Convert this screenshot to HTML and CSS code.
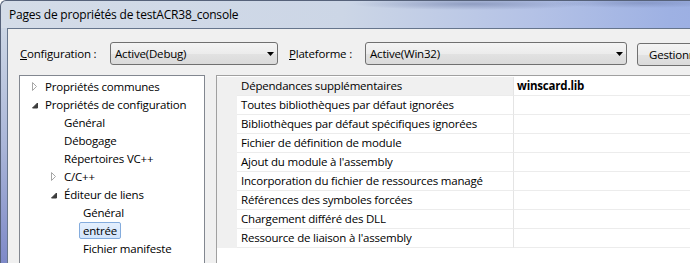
FILE: index.html
```html
<!DOCTYPE html>
<html lang="fr">
<head>
<meta charset="utf-8">
<title>Pages de propriétés de testACR38_console</title>
<link rel="stylesheet" href="styles.css">
</head>
<body>
<div class="window">
  <div class="titlebar"><span class="title-text">Pages de propriétés de testACR38_console</span></div>
  <div class="frame">
    <div class="frame-edge"></div>
    <div class="client">
      <div class="toolbar">
        <span class="field-label label-config"><u>C</u>onfiguration :</span>
        <div class="combo combo-config">
          <span>Active(Debug)</span>
          <svg class="combo-arrow" width="7" height="4" viewBox="0 0 7 4"><polygon points="0,0 7,0 3.5,4" fill="#000"/></svg>
        </div>
        <span class="field-label label-platform"><u>P</u>lateforme :</span>
        <div class="combo combo-platform">
          <span>Active(Win32)</span>
          <svg class="combo-arrow" width="7" height="4" viewBox="0 0 7 4"><polygon points="0,0 7,0 3.5,4" fill="#000"/></svg>
        </div>
        <button class="btn">Gestionnaire de configurations...</button>
      </div>
      <div class="panels">
        <div class="tree">
          <div class="tree-row lvl0">
            <span class="twisty"><svg width="6" height="9" viewBox="0 0 6 9"><polygon points="0.5,0.5 4.5,4.5 0.5,8.5" fill="#fff" stroke="#a6a6a6"/></svg></span>
            <span class="tree-label">Propriétés communes</span>
          </div>
          <div class="tree-row lvl0">
            <span class="twisty"><svg width="6" height="9" viewBox="0 0 6 9"><polygon points="5.5,3 5.5,8 0.5,8" fill="#3c3c3c" stroke="#3c3c3c" stroke-linejoin="round"/></svg></span>
            <span class="tree-label">Propriétés de configuration</span>
          </div>
          <div class="tree-row lvl1"><span class="twisty"></span><span class="tree-label">Général</span></div>
          <div class="tree-row lvl1"><span class="twisty"></span><span class="tree-label">Débogage</span></div>
          <div class="tree-row lvl1"><span class="twisty"></span><span class="tree-label">Répertoires VC++</span></div>
          <div class="tree-row lvl1">
            <span class="twisty"><svg width="6" height="9" viewBox="0 0 6 9"><polygon points="0.5,0.5 4.5,4.5 0.5,8.5" fill="#fff" stroke="#a6a6a6"/></svg></span>
            <span class="tree-label">C/C++</span>
          </div>
          <div class="tree-row lvl1">
            <span class="twisty"><svg width="6" height="9" viewBox="0 0 6 9"><polygon points="5.5,3 5.5,8 0.5,8" fill="#3c3c3c" stroke="#3c3c3c" stroke-linejoin="round"/></svg></span>
            <span class="tree-label">Éditeur de liens</span>
          </div>
          <div class="tree-row lvl2"><span class="twisty"></span><span class="tree-label">Général</span></div>
          <div class="tree-row lvl2"><span class="twisty"></span><span class="tree-label selected">entrée</span></div>
          <div class="tree-row lvl2"><span class="twisty"></span><span class="tree-label">Fichier manifeste</span></div>
          <div class="tree-row lvl2"><span class="twisty"></span><span class="tree-label">Débogage</span></div>
        </div>
        <div class="grid">
          <div class="grid-row current"><div class="gutter"></div><div class="cell name">Dépendances supplémentaires</div><div class="cell value">winscard.lib</div></div>
          <div class="grid-row"><div class="gutter"></div><div class="cell name">Toutes bibliothèques par défaut ignorées</div><div class="cell value"></div></div>
          <div class="grid-row"><div class="gutter"></div><div class="cell name">Bibliothèques par défaut spécifiques ignorées</div><div class="cell value"></div></div>
          <div class="grid-row"><div class="gutter"></div><div class="cell name">Fichier de définition de module</div><div class="cell value"></div></div>
          <div class="grid-row"><div class="gutter"></div><div class="cell name">Ajout du module à l'assembly</div><div class="cell value"></div></div>
          <div class="grid-row"><div class="gutter"></div><div class="cell name">Incorporation du fichier de ressources managé</div><div class="cell value"></div></div>
          <div class="grid-row"><div class="gutter"></div><div class="cell name">Références des symboles forcées</div><div class="cell value"></div></div>
          <div class="grid-row"><div class="gutter"></div><div class="cell name">Chargement différé des DLL</div><div class="cell value"></div></div>
          <div class="grid-row"><div class="gutter"></div><div class="cell name">Ressource de liaison à l'assembly</div><div class="cell value"></div></div>
        </div>
      </div>
    </div>
  </div>
</div>
</body>
</html>
```

FILE: styles.css
```css
html, body {
  margin: 0;
  padding: 0;
}
body {
  width: 690px;
  height: 263px;
  overflow: hidden;
  background: #ffffff;
  font-family: "Open Sans", "Noto Sans", sans-serif;
  font-size: 11.5px;
  letter-spacing: -0.2px;
  color: #000;
}
.window {
  width: 760px;
  height: 263px;
  display: flex;
  flex-direction: column;
}
.titlebar {
  height: 28px;
  box-sizing: border-box;
  border-top: 1px solid #56627a;
  border-left: 1px solid #56627a;
  border-top-left-radius: 6px;
  padding-left: 8px;
  line-height: 27px;
  font-size: 12px;
  background:
    radial-gradient(ellipse 120px 6px at 470px 3px, rgba(90,105,150,0.45), rgba(90,105,150,0) 100%),
    radial-gradient(ellipse 90px 5px at 640px 2px, rgba(90,105,150,0.35), rgba(90,105,150,0) 100%),
    linear-gradient(to right, #d4dce8 0%, #ccd6e6 45%, #b4c2e6 70%, #9eb1e3 88%, #98ace2 100%);
  color: #000;
}
.frame {
  flex: 1;
  display: flex;
  min-height: 0;
}
.frame-edge {
  width: 6px;
  flex: none;
  border-left: 1px solid #56627a;
  background: linear-gradient(to bottom, #ccd6e5 0%, #aab6d8 50%, #7e89c8 100%);
}
.client {
  flex: 1;
  min-width: 0;
  background: #f0f0f0;
  border-top: 1px solid #66758c;
  border-left: 1px solid #66758c;
  padding: 13px 0 0 11px;
  overflow: hidden;
}
.toolbar {
  display: flex;
  align-items: center;
  height: 23px;
  margin-left: 1px;
}
.toolbar > * {
  flex: none;
}
.field-label {
  white-space: nowrap;
}
.label-config {
  width: 90px;
}
.label-platform {
  width: 76px;
  margin-left: 11px;
}
.combo {
  height: 23px;
  box-sizing: border-box;
  border: 1px solid #707070;
  border-radius: 3px;
  background: linear-gradient(to bottom, #f4f4f4 0%, #ececec 50%, #e2e2e2 51%, #dadada 100%);
  display: flex;
  align-items: center;
  justify-content: space-between;
  padding: 0 3px 0 4px;
  white-space: nowrap;
}
.combo-config {
  width: 168px;
}
.combo-platform {
  width: 262px;
}
.combo-arrow {
  display: block;
}
.btn {
  align-self: flex-start;
  margin: 1px 0 0 10px;
  width: 200px;
  height: 23px;
  box-sizing: border-box;
  border: 1px solid #707070;
  border-radius: 3px;
  background: linear-gradient(to bottom, #f4f4f4 0%, #ececec 50%, #e2e2e2 51%, #dadada 100%);
  font: inherit;
  letter-spacing: inherit;
  color: #000;
  text-align: left;
  padding: 0 0 0 11px;
  white-space: nowrap;
  overflow: hidden;
}
.panels {
  display: flex;
  margin-top: 10px;
  align-items: flex-start;
}
.panels > * {
  flex: none;
}
.tree {
  width: 186px;
  height: 200px;
  box-sizing: border-box;
  border: 1px solid #828790;
  background: #fff;
  padding-top: 1px;
}
.tree-row {
  height: 18px;
  display: flex;
  align-items: center;
  white-space: nowrap;
  padding-left: 11px;
}
.tree-row.lvl1 {
  padding-left: 30px;
}
.tree-row.lvl2 {
  padding-left: 49px;
}
.twisty {
  width: 14px;
  height: 18px;
  flex: none;
  display: flex;
  align-items: center;
  padding-left: 1px;
  box-sizing: border-box;
}
.twisty svg {
  display: block;
}
.tree-label {
  margin-left: -4px;
  padding: 0 3px;
  border: 1px solid transparent;
  border-radius: 2px;
  line-height: 15px;
}
.tree-label.selected {
  border-color: #84acdd;
  background: linear-gradient(to bottom, #e4effd 0%, #d2e5fc 100%);
}
.grid {
  margin-left: 11px;
  width: 520px;
  height: 200px;
  box-sizing: border-box;
  border: 1px solid #a0a0a0;
  background: #fff;
  padding-top: 1px;
}
.grid-row {
  display: flex;
  height: 19px;
}
.gutter {
  width: 20px;
  flex: none;
  background: #f0f0f0;
}
.cell {
  box-sizing: border-box;
  border-bottom: 1px solid #ececec;
  line-height: 18px;
  white-space: nowrap;
}
.name {
  width: 276px;
  flex: none;
  padding-left: 4px;
}
.grid-row.current .name {
  background: #f0f0f0;
}
.value {
  flex: 1;
  border-left: 1px solid #e4e4e4;
  padding-left: 3px;
  font-weight: bold;
}
```
